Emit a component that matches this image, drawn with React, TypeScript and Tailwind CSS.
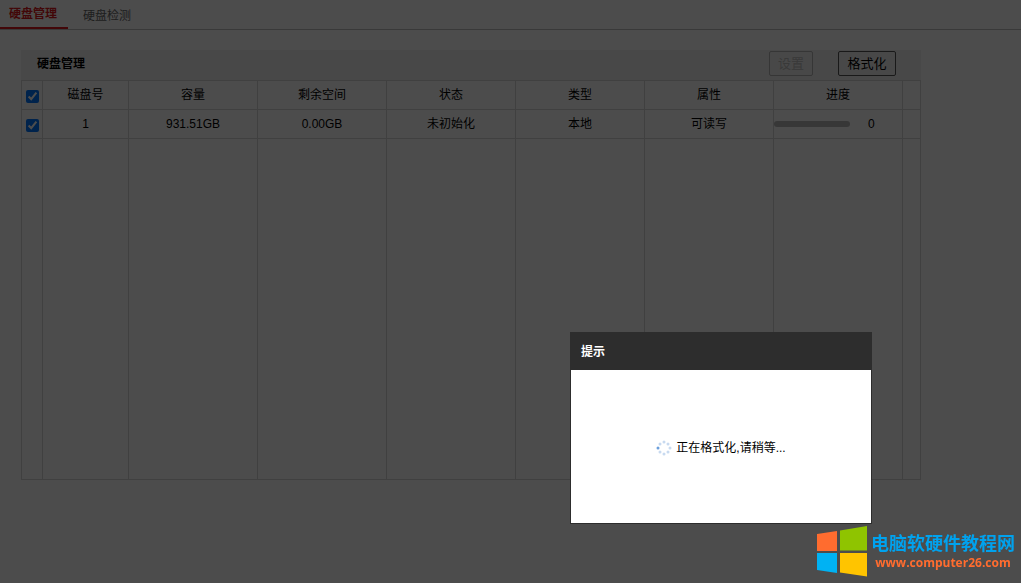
import { useId } from "react";

const columns = ["磁盘号", "容量", "剩余空间", "状态", "类型", "属性"];
const disk = ["1", "931.51GB", "0.00GB", "未初始化", "本地", "可读写"];

const cell = "border-l border-t border-[#d6d6d6] p-0 text-center font-normal";

function Spinner() {
  const dots = [
    [8, 2],
    [12, 4],
    [14, 8],
    [12, 12],
    [8, 14],
    [4, 12],
    [2, 8],
    [4, 4],
  ];
  return (
    <svg viewBox="0 0 16 16" className="h-4 w-4 shrink-0" aria-hidden="true">
      {dots.map(([x, y], i) => (
        <circle key={i} cx={x} cy={y} r="1.5" fill={i === 6 ? "#6b9fdc" : "#c8daf0"} />
      ))}
    </svg>
  );
}

function SiteMark() {
  return (
    <a href="#site" className="fixed right-1.5 bottom-1.5 z-30 flex items-center gap-1">
      <svg viewBox="0 0 50 51" className="h-[51px] w-[50px]" aria-hidden="true">
        <path d="M0 8 20 5V25H0Z" fill="#ff6c2f" />
        <path d="M23 4.500 50 0V24.500H23Z" fill="#8fc400" />
        <path d="M0 27H20V47L0 44Z" fill="#00b2f3" />
        <path d="M23 27H50V50.500L23 46.500Z" fill="#ffc400" />
      </svg>
      <span className="flex flex-col items-center pt-0.5">
        <span className="text-[18px] leading-5 font-bold whitespace-nowrap text-[#00a2ee]">
          电脑软硬件教程网
        </span>
        <span className="font-['Open_Sans','Noto_Sans',sans-serif] text-[12px] leading-[18px] font-bold text-[#ff6c2f]">
          www.computer26.com
        </span>
      </span>
    </a>
  );
}

export default function App() {
  const titleId = useId();
  return (
    <div className="min-h-screen bg-white pb-8 font-['Liberation_Sans','Noto_Sans_CJK_SC',sans-serif] text-[12px] leading-4 text-black">
      <nav className="flex h-[30px] border-b border-[#c0c0c0]">
        <a
          href="#manage"
          className="flex h-[29px] w-[68px] justify-center border-b-2 border-[#dd1a21] pr-0.5 pt-1.5 font-bold text-[#dd1a21]"
        >
          硬盘管理
        </a>
        <a href="#detect" className="ml-[15px] pt-2 text-[#666666]">
          硬盘检测
        </a>
      </nav>

      <main className="mx-[21px] mt-5 max-w-[900px]">
        <header className="flex h-[30px] items-start bg-[#f2f2f2] pt-px pr-[25px] pl-4">
          <h1 className="flex-1 pt-[5px] font-bold">硬盘管理</h1>
          <div className="flex gap-[25px] text-[13px]">
            <button
              type="button"
              disabled
              className="h-[25px] w-11 rounded-xs border border-[#b4b4b4] text-[#c0c0c0]"
            >
              设置
            </button>
            <button type="button" className="h-[25px] w-[58px] rounded-xs border border-[#555555]">
              格式化
            </button>
          </div>
        </header>

        <table className="w-full table-fixed border-separate border-spacing-0 border-r border-b border-[#d6d6d6]">
          <colgroup>
            <col className="w-[21px]" />
            <col className="w-[86px]" />
            <col span={6} />
            <col className="w-[18px]" />
          </colgroup>
          <thead>
            <tr className="h-[29px]">
              <th className={cell}>
                <input
                  type="checkbox"
                  defaultChecked
                  aria-label="全选"
                  className="mx-auto mt-0.5 block h-[13px] w-[13px]"
                />
              </th>
              {columns.map((name) => (
                <th key={name} className={cell}>
                  {name}
                </th>
              ))}
              <th className={cell}>进度</th>
              <th className={cell} />
            </tr>
          </thead>
          <tbody>
            <tr className="h-[29px]">
              <td className={cell}>
                <input
                  type="checkbox"
                  defaultChecked
                  aria-label="磁盘 1"
                  className="mx-auto mt-0.5 block h-[13px] w-[13px]"
                />
              </td>
              {disk.map((value) => (
                <td key={value} className={cell}>
                  {value}
                </td>
              ))}
              <td className={cell}>
                <div className="flex items-center">
                  <div
                    role="progressbar"
                    aria-label="进度"
                    aria-valuenow={0}
                    className="h-1.5 w-[76px] rounded-full bg-[#b8b8b8]"
                  />
                  <span className="ml-[18px]">0</span>
                </div>
              </td>
              <td className={cell} />
            </tr>
            <tr className="h-[341px]">
              {[...columns, "进度", "选择", "末列"].map((name) => (
                <td key={name} className={cell} />
              ))}
            </tr>
          </tbody>
        </table>
      </main>

      <div className="fixed inset-0 z-10 bg-black/70" />

      <section
        role="dialog"
        aria-modal="true"
        aria-labelledby={titleId}
        className="fixed right-[149px] bottom-[59px] z-20 w-[302px] border border-[#2d2d2d] bg-white"
      >
        <h2 id={titleId} className="flex h-[37px] items-center bg-[#2d2d2d] px-2.5 font-bold text-white">
          提示
        </h2>
        <p className="flex h-[153px] items-center justify-center gap-1 pt-0.5">
          <Spinner />
          正在格式化,请稍等...
        </p>
      </section>

      <SiteMark />
    </div>
  );
}
